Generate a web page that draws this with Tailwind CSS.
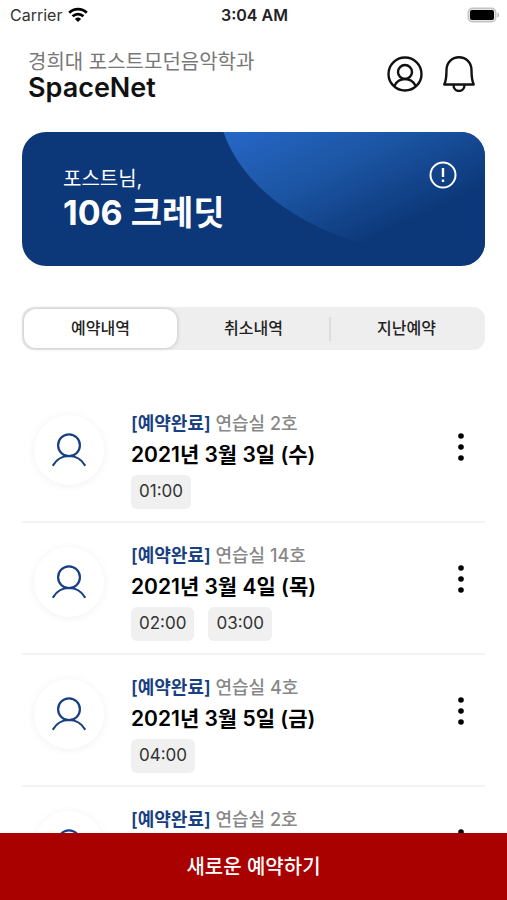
<!DOCTYPE html>
<html lang="ko">
<head>
<meta charset="utf-8">
<meta name="viewport" content="width=device-width, initial-scale=1">
<title>SpaceNet</title>
<script src="https://cdn.jsdelivr.net/npm/@tailwindcss/browser@4"></script>
</head>
<body class="bg-white text-black font-['Inter','Noto_Sans_CJK_KR',sans-serif]">
<svg class="hidden" aria-hidden="true">
  <symbol id="person" viewBox="0 0 34 34"><g fill="none" stroke="#173f83" stroke-width="2.200" stroke-linecap="round"><circle cx="17" cy="12.200" r="10.900"/><path d="M1.300 32C5 25.800 10.500 23 17 23S29 25.800 32.700 32"/></g></symbol>
  <symbol id="dots" viewBox="0 0 6 28"><circle cx="3" cy="3" r="2.800"/><circle cx="3" cy="14" r="2.800"/><circle cx="3" cy="25" r="2.800"/></symbol>
</svg>
<div class="flex h-screen flex-col">
  <div class="grid h-[30px] shrink-0 grid-cols-3 items-center pl-2.5 pr-2">
    <div class="flex items-center gap-1.5 text-base text-[#333]"><span>Carrier</span>
      <svg class="h-4 w-5" viewBox="0 0 20 16" fill="none" stroke="#000" stroke-width="2.800" aria-label="Wi-Fi"><path d="M1.200 5.700C6.300 .8 13.700 .8 18.800 5.700"/><path d="M4.600 9.200C7.700 6.300 12.300 6.300 15.400 9.200"/><path d="M10 15 6.900 11.900Q10 9.200 13.100 11.900Z" fill="#000" stroke="none"/></svg>
    </div>
    <div class="text-center text-base font-semibold text-[#222]">3:04 AM</div>
    <svg class="h-4 w-8 justify-self-end" viewBox="0 0 32 16" aria-label="Battery"><rect x=".5" y=".5" width="29" height="15" rx="5" fill="#c4c4c4"/><rect x="2" y="2" width="26" height="12" rx="3.500" fill="#e4e4e4"/><rect x="3" y="3" width="24" height="10" rx="2" fill="#000"/><path d="M30.500 5.500Q32 6 32 8T30.500 10.500Z" fill="#aaa"/></svg>
  </div>

  <header class="flex shrink-0 items-center justify-between pt-[18px] pr-8 pl-7">
    <div>
      <p class="text-xl leading-7 text-[#777] font-normal">경희대 포스트모던음악학과</p>
      <h1 class="text-[27px] leading-6 font-semibold text-[#111]">SpaceNet</h1>
    </div>
    <div class="flex items-center gap-5">
      <button type="button" aria-label="내 정보"><svg class="size-9" viewBox="0 0 36 36" fill="none" stroke="#111" stroke-width="2.400"><circle cx="18" cy="18" r="16.500"/><circle cx="18" cy="16" r="7"/><path d="M7.300 30C9.500 25.500 13.500 23 18 23S26.500 25.500 28.700 30"/></svg></button>
      <button type="button" aria-label="알림"><svg class="h-9 w-8" viewBox="0 0 32 36" fill="none" stroke="#111" stroke-width="2.400" stroke-linejoin="round"><path d="M1.300 28.500C3.200 24.500 3.500 21 3.500 14C3.500 6.500 9 1.300 16 1.300S28.500 6.500 28.500 14C28.500 21 28.800 24.500 30.700 28.500Z"/><path d="M10.500 29C10.500 37 21.500 37 21.500 29"/></svg></button>
    </div>
  </header>

  <section class="relative mx-[22px] mt-8 flex h-[134px] shrink-0 items-start justify-between overflow-hidden rounded-[24px] bg-[#0c3778] pt-[29px] pr-7 pl-[41px] text-white">
    <svg class="absolute inset-0 h-full w-full" viewBox="0 0 462 134" preserveAspectRatio="none" aria-hidden="true">
      <defs><linearGradient id="glow" gradientUnits="userSpaceOnUse" x1="235" y1="-20" x2="320" y2="155"><stop offset="0" stop-color="#2768c8"/><stop offset=".45" stop-color="#1b54a2"/><stop offset=".86" stop-color="#0c3778"/></linearGradient></defs>
      <path d="M201 0C212 32 244 80 333 110C385 126 425 134 462 134V0Z" fill="url(#glow)"/>
    </svg>
    <div class="relative pt-1">
      <p class="text-xl leading-7 font-normal">포스트님,</p>
      <p class="text-[34px] leading-10 font-bold">106 크레딧</p>
    </div>
    <button type="button" class="relative" aria-label="안내"><svg class="size-7" viewBox="0 0 28 28" fill="none" stroke="#fff" stroke-width="2"><circle cx="14" cy="14" r="12.500"/><path d="M14 7v9M14 18.500v2.500" stroke-width="2.400"/></svg></button>
  </section>

  <nav class="mx-[22px] mt-[41px] flex h-[43px] shrink-0 items-center rounded-xl bg-[#eee] p-0.5 text-base font-medium text-[#222]">
    <button type="button" class="h-full flex-1 pb-0.5 rounded-xl bg-white shadow-[0_0_4px_rgba(0,0,0,0.22)]" aria-pressed="true">예약내역</button>
    <button type="button" class="h-full flex-1 pb-0.5">취소내역</button>
    <span class="-mx-px h-6 w-0.5 bg-[#dcdcdc]"></span>
    <button type="button" class="h-full flex-1 pb-0.5">지난예약</button>
  </nav>

  <ul class="mt-[41px] min-h-0 flex-1 overflow-y-auto px-[22px] [scrollbar-width:none]">
    <li class="flex items-start border-b-2 border-[#f4f4f4] pt-5 pb-3">
      <div class="ml-3 mt-1 flex size-[70px] shrink-0 items-center justify-center rounded-full bg-white shadow-[0_1px_10px_rgba(0,0,0,0.06)]"><svg class="size-[34px]"><use href="#person"/></svg></div>
      <div class="ml-[27px] flex-1">
        <p class="text-lg leading-[26px] font-medium text-[#888]"><span class="font-semibold text-[#173f83]">[예약완료]</span> 연습실 2호</p>
        <h2 class="text-[21px] leading-9 font-semibold">2021년 3월 3일 (수)</h2>
        <div class="mt-0.5 flex gap-3 text-[17px] text-[#333]"><span class="flex h-[34px] items-center rounded-md bg-[#f0f0f0] px-2">01:00</span></div>
      </div>
      <button type="button" class="mt-[22px] mr-[21px]" aria-label="더보기"><svg class="h-7 w-1.5"><use href="#dots"/></svg></button>
    </li>
    <li class="flex items-start border-b-2 border-[#f4f4f4] pt-5 pb-3">
      <div class="ml-3 mt-1 flex size-[70px] shrink-0 items-center justify-center rounded-full bg-white shadow-[0_1px_10px_rgba(0,0,0,0.06)]"><svg class="size-[34px]"><use href="#person"/></svg></div>
      <div class="ml-[27px] flex-1">
        <p class="text-lg leading-[26px] font-medium text-[#888]"><span class="font-semibold text-[#173f83]">[예약완료]</span> 연습실 14호</p>
        <h2 class="text-[21px] leading-9 font-semibold">2021년 3월 4일 (목)</h2>
        <div class="mt-0.5 flex gap-3.5 text-[17px] text-[#333]"><span class="flex h-[34px] items-center rounded-md bg-[#f0f0f0] px-2">02:00</span><span class="flex h-[34px] items-center rounded-md bg-[#f0f0f0] px-2">03:00</span></div>
      </div>
      <button type="button" class="mt-[22px] mr-[21px]" aria-label="더보기"><svg class="h-7 w-1.5"><use href="#dots"/></svg></button>
    </li>
    <li class="flex items-start border-b-2 border-[#f4f4f4] pt-5 pb-3">
      <div class="ml-3 mt-1 flex size-[70px] shrink-0 items-center justify-center rounded-full bg-white shadow-[0_1px_10px_rgba(0,0,0,0.06)]"><svg class="size-[34px]"><use href="#person"/></svg></div>
      <div class="ml-[27px] flex-1">
        <p class="text-lg leading-[26px] font-medium text-[#888]"><span class="font-semibold text-[#173f83]">[예약완료]</span> 연습실 4호</p>
        <h2 class="text-[21px] leading-9 font-semibold">2021년 3월 5일 (금)</h2>
        <div class="mt-0.5 flex gap-3 text-[17px] text-[#333]"><span class="flex h-[34px] items-center rounded-md bg-[#f0f0f0] px-2">04:00</span></div>
      </div>
      <button type="button" class="mt-[22px] mr-[21px]" aria-label="더보기"><svg class="h-7 w-1.5"><use href="#dots"/></svg></button>
    </li>
    <li class="flex items-start pt-5 pb-3">
      <div class="ml-3 mt-1 flex size-[70px] shrink-0 items-center justify-center rounded-full bg-white shadow-[0_1px_10px_rgba(0,0,0,0.06)]"><svg class="size-[34px]"><use href="#person"/></svg></div>
      <div class="ml-[27px] flex-1">
        <p class="text-lg leading-[26px] font-medium text-[#888]"><span class="font-semibold text-[#173f83]">[예약완료]</span> 연습실 2호</p>
      </div>
      <button type="button" class="mt-[22px] mr-[21px]" aria-label="더보기"><svg class="h-7 w-1.5"><use href="#dots"/></svg></button>
    </li>
  </ul>

  <button type="button" class="h-[67px] w-full shrink-0 bg-[#a90000] text-xl font-medium text-white">새로운 예약하기</button>
</div>
</body>
</html>
